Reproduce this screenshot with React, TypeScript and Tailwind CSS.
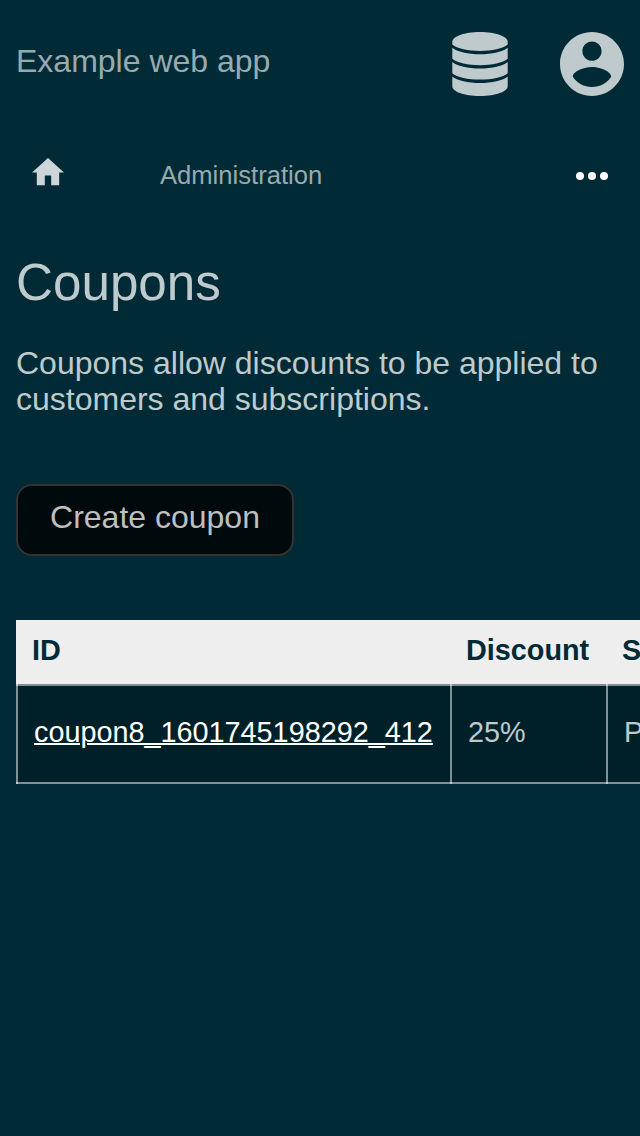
import React from "react";

function DatabaseIcon() {
  return (
    <svg className="h-16 w-14" viewBox="0 0 56 64" fill="currentColor">
      <path d="M28 0C44 0 55.700 4.600 55.700 9.800V12.600C51 16.600 40 19 28 19S5 16.600 .300 12.600V9.800C.300 4.600 12 0 28 0Z" />
      <path d="M.300 15.700C5 19.700 16 22.200 28 22.200S51 19.700 55.700 15.700V26.800C51 30.800 40 33.200 28 33.200S5 30.800 .300 26.800Z" />
      <path d="M.300 30C5 34 16 36.500 28 36.500S51 34 55.700 30V41.200C51 45.200 40 47.600 28 47.600S5 45.200 .300 41.200Z" />
      <path d="M.300 44.500C5 48.500 16 51 28 51S51 48.500 55.700 44.500V54.200C55.700 59.400 44 64 28 64S.300 59.400 .300 54.200Z" />
    </svg>
  );
}

function AccountIcon() {
  return (
    <svg className="size-16" viewBox="2 2 20 20" fill="currentColor">
      <path d="M12 2C6.480 2 2 6.480 2 12s4.480 10 10 10 10-4.480 10-10S17.520 2 12 2zm0 3c1.660 0 3 1.340 3 3s-1.340 3-3 3-3-1.340-3-3 1.340-3 3-3zm0 14.200c-2.500 0-4.710-1.280-6-3.220.03-1.990 4-3.080 6-3.080 1.990 0 5.970 1.090 6 3.080-1.290 1.940-3.500 3.220-6 3.220z" />
    </svg>
  );
}

function HomeIcon() {
  return (
    <svg className="h-[27.2px] w-8" viewBox="2 3 20 17" fill="currentColor">
      <path d="M10 20v-6h4v6h5v-8h3L12 3 2 12h3v8z" />
    </svg>
  );
}

function MoreIcon() {
  return (
    <svg className="h-2 w-8" viewBox="0 0 32 8" fill="currentColor">
      <circle cx="4" cy="4" r="4" />
      <circle cx="16" cy="4" r="4" />
      <circle cx="28" cy="4" r="4" />
    </svg>
  );
}

const coupons = [{ id: "coupon8_1601745198292_412", discount: "25%", status: "Published" }];

export default function App() {
  return (
    <div className="h-[1136px] w-full overflow-hidden bg-[#002b36] px-4 font-['Liberation_Sans',Arial,sans-serif] text-[32px] leading-9 text-[#bfcacd]">
      <header className="flex h-32 items-center justify-between">
        <span className="-mt-1.5 text-[#99aaaf]">Example web app</span>
        <div className="flex gap-[52px]">
          <DatabaseIcon />
          <AccountIcon />
        </div>
      </header>

      <nav className="flex h-24 items-center px-4">
        <a href="#" className="-mt-2 text-[#ccd5d7]">
          <HomeIcon />
        </a>
        <a href="#" className="-mt-0.5 ml-24 text-[25.6px] text-[#99aaaf]">Administration</a>
        <button className="ml-auto text-white">
          <MoreIcon />
        </button>
      </nav>

      <main>
        <h1 className="pt-[29px] text-[51.2px] leading-[60px]">Coupons</h1>
        <p className="pt-8 leading-9">
          Coupons allow discounts to be applied to customers and subscriptions.
        </p>
        <button className="mt-[67px] block h-[72px] w-[278px] rounded-2xl border-2 border-[#333333] bg-[#000a0d] pb-1.5 text-[#bfbfbf]">
          Create coupon
        </button>

        <div className="-mr-4 mt-16 overflow-hidden">
          <div role="table" className="w-[760px] text-[28.8px] leading-8">
            <div
              role="row"
              className="grid h-16 grid-cols-[434px_156px_1fr] items-center bg-[#eeeeee] pb-1 font-bold text-[#002b36]"
            >
              <span role="columnheader" className="px-4">ID</span>
              <span role="columnheader" className="px-4">Discount</span>
              <span role="columnheader" className="px-4">Status</span>
            </div>
            {coupons.map((coupon) => (
              <div
                role="row"
                key={coupon.id}
                className="grid h-[100px] grid-cols-[434px_156px_1fr] border-y-2 border-white/50 bg-[#002029]"
              >
                <span role="cell" className="-my-0.5 flex items-center border-l-2 border-white/50 px-4 pb-1 text-white">
                  <a href="#" className="underline decoration-2">{coupon.id}</a>
                </span>
                <span role="cell" className="-my-0.5 flex items-center border-l-2 border-white/50 px-4 pb-1">
                  {coupon.discount}
                </span>
                <span role="cell" className="-my-0.5 flex items-center border-l-2 border-white/50 px-4 pb-1">
                  {coupon.status}
                </span>
              </div>
            ))}
          </div>
        </div>
      </main>
    </div>
  );
}
